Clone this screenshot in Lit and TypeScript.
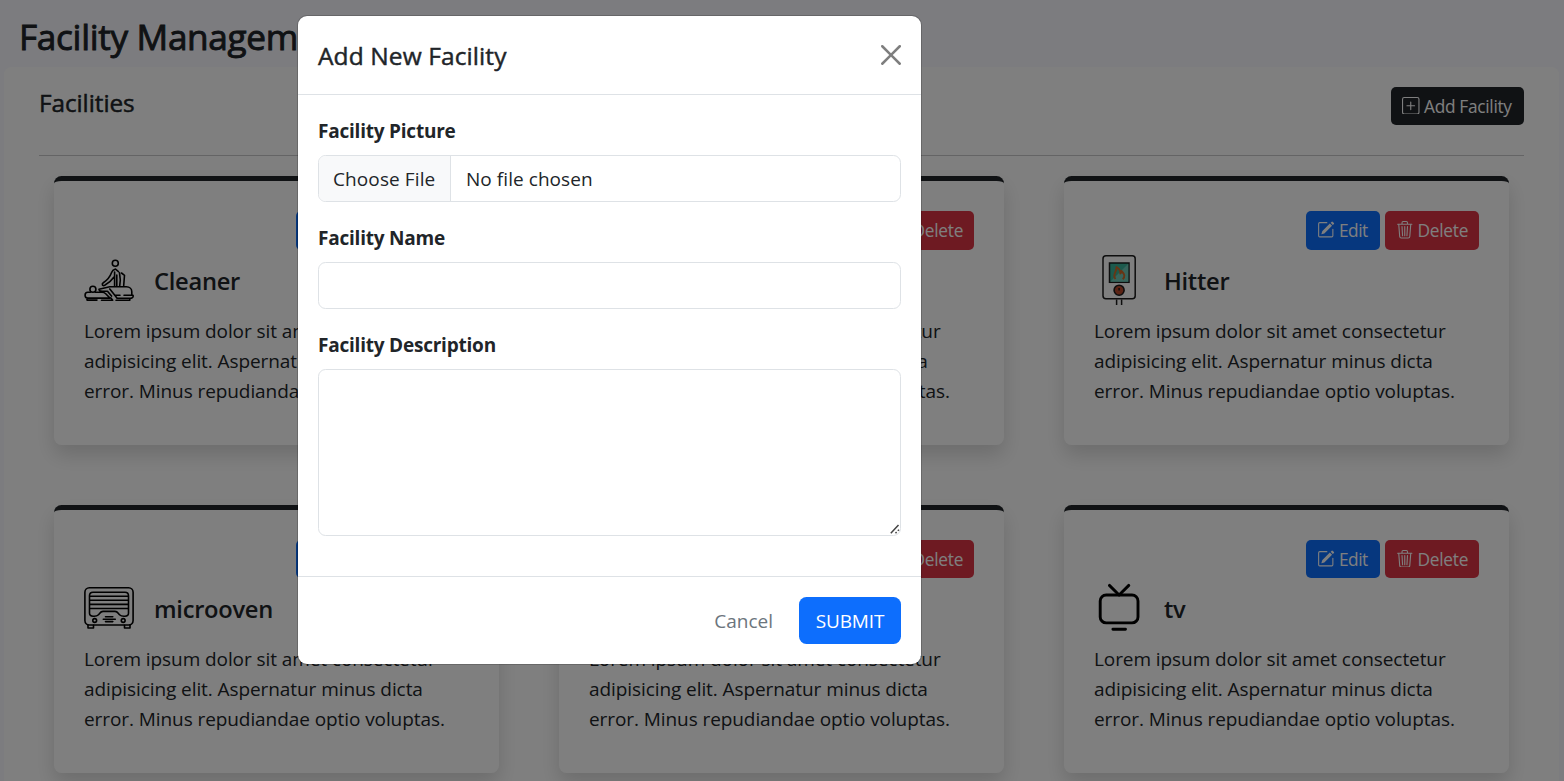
import { LitElement, html, css, svg, nothing } from 'lit';
import { customElement, property } from 'lit/decorators.js';

const bi = {
  plus: svg`<path d="M14 1a1 1 0 0 1 1 1v12a1 1 0 0 1-1 1H2a1 1 0 0 1-1-1V2a1 1 0 0 1 1-1zM2 0a2 2 0 0 0-2 2v12a2 2 0 0 0 2 2h12a2 2 0 0 0 2-2V2a2 2 0 0 0-2-2z"/><path d="M8 4a.5.5 0 0 1 .5.5v3h3a.5.5 0 0 1 0 1h-3v3a.5.5 0 0 1-1 0v-3h-3a.5.5 0 0 1 0-1h3v-3A.5.5 0 0 1 8 4"/>`,
  edit: svg`<path d="M15.502 1.94a.5.5 0 0 1 0 .706L14.459 3.69l-2-2L13.502.646a.5.5 0 0 1 .707 0l1.293 1.293zm-1.75 2.456-2-2L4.939 9.21a.5.5 0 0 0-.121.196l-.805 2.414a.25.25 0 0 0 .316.316l2.414-.805a.5.5 0 0 0 .196-.12l6.813-6.814z"/><path fill-rule="evenodd" d="M1 13.5A1.5 1.5 0 0 0 2.5 15h11a1.5 1.5 0 0 0 1.5-1.5v-6a.5.5 0 0 0-1 0v6a.5.5 0 0 1-.5.5h-11a.5.5 0 0 1-.5-.5v-11a.5.5 0 0 1 .5-.5H9a.5.5 0 0 0 0-1H2.5A1.5 1.5 0 0 0 1 2.5z"/>`,
  trash: svg`<path d="M6.5 1h3a.5.5 0 0 1 .5.5v1H6v-1a.5.5 0 0 1 .5-.5M11 2.5v-1A1.5 1.5 0 0 0 9.5 0h-3A1.5 1.5 0 0 0 5 1.5v1H1.5a.5.5 0 0 0 0 1h.538l.853 10.66A2 2 0 0 0 4.885 16h6.23a2 2 0 0 0 1.994-1.84l.853-10.66h.538a.5.5 0 0 0 0-1zm1.958 1-.846 10.58a1 1 0 0 1-.997.92h-6.23a1 1 0 0 1-.997-.92L3.042 3.5zm-7.487 1a.5.5 0 0 1 .528.47l.5 8.5a.5.5 0 0 1-.998.06L5 5.03a.5.5 0 0 1 .47-.53zm5.058 0a.5.5 0 0 1 .47.53l-.5 8.5a.5.5 0 1 1-.998-.06l.5-8.5a.5.5 0 0 1 .528-.47M8 4.5a.5.5 0 0 1 .5.5v8.5a.5.5 0 0 1-1 0V5a.5.5 0 0 1 .5-.5"/>`,
};

const art: Record<string, unknown> = {
  Cleaner: svg`<g fill="none" stroke="#000" stroke-width="1.6" stroke-linecap="round" stroke-linejoin="round">
    <circle cx="31.3" cy="8.3" r="3"/>
    <path d="M31 14.200c-1.700.5-2.800 1.700-3.400 3.300-1.500 4-4.300 7.700-8.300 10.200-1.900 1.200-.9 3.700 1.400 2.600 4.300-2.200 7-5 9.300-8.300M31.500 14.200l3 2.400M30.600 17v14M32.800 20v11M35.500 17.800l.8 7.200-.6 6M37.500 18l3 2.300-.8 10.300"/>
    <circle cx="8.900" cy="34.300" r="3"/>
    <path d="M6.500 37.300H3.700c-3.500 0-3.500 5.800 0 5.800H26l-4.300-4.300c-1-1-2-1.500-3.500-1.500h-7M15 34.300l10.800-2.500h16.500c3.500 0 5.500 2.300 5.500 5v3.500H40M36 40.300h-5M15 34.300c0 1.500 1.500 2 3.500 2h5l4 4.800M25.800 34l5 6.300 2.300 3h12.400M49 40.300c.7 2-1 3-3.500 3M3 43.500v1.600h10M17.500 45.300h11.200l-2-2.500M32 45.300h13.800v-1.800"/></g>`,
  Hitter: svg`<g fill="none" stroke="#1c1c1c" stroke-width="1.5">
    <rect x="9" y=".8" width="32.2" height="43" rx="3"/>
    <rect x="15.5" y="8" width="19.5" height="19.3" fill="#3ab49a"/>
    <path d="M34.300 8.700v18H16.200z" fill="#70cbb9" stroke="none"/>
    <path d="M21.500 24c-3.800-4.500 1.300-6.300 1-12 3 1.800 4 4.200 3.800 6.500.9-.5 1.200-1.300 1.200-2.500 3.300 3.300 3.800 5.800 1.200 8.200" stroke="#d06a28" stroke-width="1.9" stroke-linejoin="round"/>
    <circle cx="25.1" cy="35.2" r="5" fill="#b8492b" stroke-width="1.6"/><path d="M25.100 33v2.500"/>
    <path d="M22.600 44.500V50M27.600 44.500V50"/></g>`,
  microoven: svg`<g fill="none" stroke="#000" stroke-width="1.6" stroke-linejoin="round" stroke-linecap="round">
    <rect x=".9" y="4.8" width="48.2" height="37.2" rx="4.5"/>
    <path d="M9 9.200h32c2 0 3.500 1.500 3.500 3.500v17.500c0 4-7 3.500-9 1.500-1.500-1.500-2-3.300-4.500-3.300H19c-2.500 0-3 1.800-4.500 3.300-2 2-9 2.500-9-1.500V12.700c0-2 1.500-3.500 3.500-3.500z"/>
    <path d="M6 13.200h38M6 17.300h38M6 21.400h38M6 25.500h38M21.500 33.700h7.300M19.300 36.200h12M21.500 38.600h7.300M4 42.200V45h5.500v-2.800M40.500 42.200V45H46v-2.800"/>
    <circle cx="10.7" cy="37.5" r="1.9"/><circle cx="39.2" cy="37.5" r="1.9"/></g>`,
  tv: svg`<g fill="none" stroke="#000" stroke-width="2.9" stroke-linecap="round" stroke-linejoin="round"><rect x="6.2" y="12" width="37.8" height="27.9" rx="6"/><path d="M15.400 2.400 25.100 12l9.700-9.600M18.900 46.300h12.600"/></g>`,
};

@customElement('tool-button')
class ToolButton extends LitElement {
  @property() icon: keyof typeof bi = 'plus';
  @property() label = '';
  @property({ reflect: true }) tone = 'dark';
  static styles = css`
    :host { display: block; }
    .btn { box-sizing: border-box; display: flex; align-items: center; width: 100%; height: 38px; border: 0; border-radius: 5px; margin: 0;
      padding: 0 0 0 11px; gap: 4.5px; color: #fff; background: #212529; font: 400 17.3px/26px "Open Sans", sans-serif; letter-spacing: -.3px; white-space: nowrap; }
    svg { width: 17.5px; height: 17.5px; flex: none; fill: currentColor; margin-top: -1px; }
    .caption { padding-top: 2px; }
    :host([tone='primary']) .btn { background: #0d6efd; height: 38.5px; letter-spacing: -.5px; }
    :host([tone='danger']) .btn { background: #dc3545; height: 38.5px; letter-spacing: -.25px; gap: 4px; }
  `;
  render() {
    return html`<button class="btn"><svg viewBox="0 0 16 16">${bi[this.icon]}</svg><span class="caption">${this.label}</span></button>`;
  }
}

@customElement('facility-card')
class FacilityCard extends LitElement {
  @property() name = '';
  static styles = css`
    :host { display: block; box-sizing: border-box; height: 268.55px; padding: 30px; background: #fff; border-top: 5px solid #212529;
      border-radius: 7.5px; box-shadow: 0 10px 20px rgba(0, 0, 0, .15); }
    .actions { display: flex; justify-content: flex-end; gap: 5px; height: 38.25px; }
    .edit { width: 74px; }
    .delete { width: 94px; }
    .heading { display: flex; align-items: center; gap: 20px; margin-top: 5.6px; height: 50px; }
    .art { width: 50px; height: 50px; flex: none; }
    .name { margin: 0; font-size: 23.7px; font-weight: 600; letter-spacing: -.28px; line-height: 30px; padding-top: 1.9px; }
    .text { margin: 10.95px 0 0; line-height: 30px; white-space: nowrap; }
  `;
  render() {
    return html`
      <div class="actions">
        <tool-button class="edit" tone="primary" icon="edit" label="Edit"></tool-button>
        <tool-button class="delete" tone="danger" icon="trash" label="Delete"></tool-button>
      </div>
      <div class="heading">
        ${this.name ? html`<svg class="art" viewBox="0 0 50 50">${art[this.name]}</svg><h4 class="name">${this.name}</h4>` : nothing}
      </div>
      <p class="text">Lorem ipsum dolor sit amet consectetur<br>adipisicing elit. Aspernatur minus dicta<br>error. Minus repudiandae optio voluptas.</p>`;
  }
}

@customElement('facility-dialog')
class FacilityDialog extends LitElement {
  static styles = css`
    :host { display: block; box-sizing: border-box; width: 625px; background: #fff; background-clip: padding-box; border: 1px solid rgba(0, 0, 0, .175); border-radius: 10px; }
    .header { display: flex; align-items: center; justify-content: space-between; height: 78px; padding: 0 20px; border-bottom: 1px solid #dee2e6; }
    .title { margin: 0; font-size: 24.5px; font-weight: 400; -webkit-text-stroke: .45px currentColor; letter-spacing: .1px; padding-top: 2px; }
    .close { width: 20px; height: 20px; opacity: .5; }
    .body { padding: 20px 20px 40px; display: grid; gap: 20px; }
    .field { display: grid; grid-template-rows: 40px auto; }
    .label { font-weight: 700; line-height: 32px; letter-spacing: -.22px; }
    .control { box-sizing: border-box; width: 100%; height: 47px; margin: 0; border: 1px solid #dee2e6; border-radius: 7.5px; background: #fff; font: inherit; outline: 0; padding: 0 15px; }
    .file { display: flex; padding: 0; overflow: hidden; line-height: 47px; }
    .choose { box-sizing: border-box; width: 132px; padding-left: 14px; background: #f8f9fa; border-right: 1px solid #dee2e6; letter-spacing: .1px; }
    .chosen { padding-left: 15px; letter-spacing: .06px; }
    .area { position: relative; height: 167px; }
    .text { display: block; height: 167px; resize: none; }
    .grip { position: absolute; right: 1px; bottom: 2px; width: 10px; height: 10px; }
    .footer { display: flex; justify-content: flex-end; align-items: center; gap: 10px; height: 87px; padding: 0 20px; border-top: 1px solid #dee2e6; }
    .btn { height: 47px; border: 0; border-radius: 7.5px; margin: 0; padding: 1px 16px 0; font: inherit; }
    .cancel { color: #6c757d; background: none; }
    .submit { width: 102px; padding: 1px 0 0; color: #fff; background: #0d6efd; letter-spacing: -.15px; }
  `;
  render() {
    return html`
      <div class="header">
        <h5 class="title">Add New Facility</h5>
        <svg class="close" viewBox="0 0 16 16"><path d="M.293.293a1 1 0 0 1 1.414 0L8 6.586 14.293.293a1 1 0 1 1 1.414 1.414L9.414 8l6.293 6.293a1 1 0 0 1-1.414 1.414L8 9.414l-6.293 6.293a1 1 0 0 1-1.414-1.414L6.586 8 .293 1.707a1 1 0 0 1 0-1.414z"/></svg>
      </div>
      <div class="body">
        <div class="field"><span class="label">Facility Picture</span>
          <div class="control file"><span class="choose">Choose File</span><span class="chosen">No file chosen</span></div></div>
        <div class="field"><span class="label">Facility Name</span><input class="control"></div>
        <div class="field"><span class="label">Facility Description</span>
          <div class="area"><textarea class="control text"></textarea>
            <svg class="grip" viewBox="0 0 10 10"><path d="M.8 9.200 8.500 1M5.500 9.200 6.600 8M7.800 6.800 9 5.700" stroke="#444" stroke-width="1.5"/></svg></div></div>
      </div>
      <div class="footer"><button class="btn cancel">Cancel</button><button class="btn submit">SUBMIT</button></div>`;
  }
}

@customElement('app-root')
class AppRoot extends LitElement {
  static styles = css`
    :host { display: block; box-sizing: border-box; height: 781px; overflow: hidden; position: relative; background: #f9f9ff;
      color: #212529; font: 400 19px/30px "Open Sans", sans-serif; letter-spacing: -.08px; }
    .title { margin: 0; height: 67px; padding-left: 19px; font-size: 35.2px; font-weight: 400; -webkit-text-stroke: .9px currentColor; line-height: 72px; letter-spacing: -.33px; }
    .panel { box-sizing: border-box; margin: 0 5px 0 4px; height: 740px; padding: 20px 35px; background: #fff; border-radius: 7.5px; }
    .bar { display: flex; justify-content: space-between; height: 68px; border-bottom: 1px solid #c8c9ca; }
    .subtitle { margin: 0; font-size: 24.3px; font-weight: 400; -webkit-text-stroke: .5px currentColor; line-height: 32px; letter-spacing: -.05px; }
    .add { width: 133px; }
    .grid { display: grid; grid-template-columns: repeat(3, 445px); gap: 60px; padding: 20px 15px; }
    .backdrop { position: absolute; inset: 0; background: rgba(0, 0, 0, .5); }
    .dialog { position: absolute; left: 297px; top: 15px; }
  `;
  render() {
    return html`
      <h2 class="title">Facility Management</h2>
      <div class="panel">
        <div class="bar"><h5 class="subtitle">Facilities</h5><tool-button class="add" icon="plus" label="Add Facility"></tool-button></div>
        <div class="grid">${['Cleaner', '', 'Hitter', 'microoven', '', 'tv'].map((n) => html`<facility-card .name=${n}></facility-card>`)}</div>
      </div>
      <div class="backdrop"></div>
      <facility-dialog class="dialog"></facility-dialog>`;
  }
}
